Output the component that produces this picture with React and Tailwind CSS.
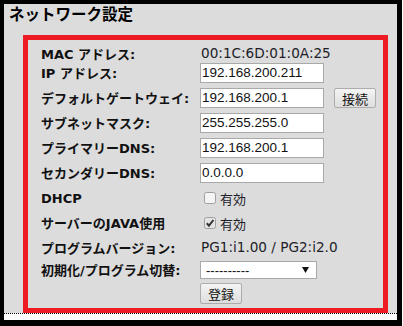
import React from "react";

const LABEL = "[font-family:'DejaVu_Sans','Noto_Sans_CJK_JP',sans-serif] font-bold text-[13px] text-[#111] leading-none";
const VALUE = "[font-family:'DejaVu_Sans','Noto_Sans_CJK_JP',sans-serif] text-[13.6px] text-[#1e1e2a] leading-none";
const INPUT = "w-[124px] h-[20px] bg-white border border-[#a9a9a9] pl-[1px] flex items-center [font-family:'Liberation_Sans',sans-serif] text-[13.5px] text-[#111] leading-none";

function Row({ label, children, className = "" }) {
  return (
    <div className={"flex items-center " + className}>
      <div className={"w-[159px] shrink-0 " + LABEL}>{label}</div>
      <div className="flex items-center">{children}</div>
    </div>
  );
}

function Input({ value }) {
  return <div className={INPUT}>{value}</div>;
}

function Check({ checked }) {
  return (
    <svg width="12" height="12" viewBox="0 0 12 12" className="ml-[4px] mr-[4px] shrink-0">
      <rect x="0.5" y="0.5" width="11" height="11" rx="2" fill={checked ? "#e4e4e4" : "#f4f4f4"} stroke="#a0a0a0" />
      {checked && <path d="M2.8 6.2 L5 8.6 L9.4 3" fill="none" stroke="#333" strokeWidth="2" />}
    </svg>
  );
}

function Button({ children, className = "" }) {
  return (
    <div
      className={
        "h-[20px] border border-[#adadad] rounded-[2px] bg-gradient-to-b from-[#f4f4f4] to-[#dedede] flex items-center justify-center [font-family:'Noto_Sans_CJK_JP',sans-serif] text-[13px] text-[#111] leading-none " +
        className
      }
    >
      {children}
    </div>
  );
}

export default function App() {
  return (
    <div className="flex w-[403px] h-[326px] bg-black overflow-hidden">
      <div className="ml-[4px] mt-[4px] w-[393px] flex flex-col shrink-0">
        <div className="h-[309px] bg-[#dcdcdc] flex flex-col">
          <div className="pl-[5px] h-[20px] flex items-center [font-family:'Noto_Sans_CJK_JP',sans-serif] text-[15.5px] font-bold text-black leading-none">
            ネットワーク設定
          </div>
          <div className="ml-[19px] mt-[11px] w-[365px] h-[278px] border-[5px] border-[#ed1c24] pl-[13px] flex flex-col">
            <Row label="MAC アドレス:" className="mt-[5px] h-[18px]">
              <span className={VALUE + " pl-[1px]"}>00:1C:6D:01:0A:25</span>
            </Row>
            <Row label="IP アドレス:" className="h-[20px]">
              <Input value="192.168.200.211" />
            </Row>
            <Row label="デフォルトゲートウェイ:" className="mt-[5px] h-[20px]">
              <Input value="192.168.200.1" />
              <Button className="ml-[10px] w-[42px]">接続</Button>
            </Row>
            <Row label="サブネットマスク:" className="mt-[5px] h-[20px]">
              <Input value="255.255.255.0" />
            </Row>
            <Row label="プライマリーDNS:" className="mt-[5px] h-[20px]">
              <Input value="192.168.200.1" />
            </Row>
            <Row label="セカンダリーDNS:" className="mt-[5px] h-[20px]">
              <Input value="0.0.0.0" />
            </Row>
            <Row label="DHCP" className="mt-[5px] h-[20px]">
              <Check checked={false} />
              <span className="[font-family:'Noto_Sans_CJK_JP',sans-serif] text-[13px] text-[#1e1e2a] leading-none">有効</span>
            </Row>
            <Row label="サーバーのJAVA使用" className="mt-[5px] h-[20px]">
              <Check checked={true} />
              <span className="[font-family:'Noto_Sans_CJK_JP',sans-serif] text-[13px] text-[#1e1e2a] leading-none">有効</span>
            </Row>
            <Row label="プログラムバージョン:" className="mt-[5px] h-[20px]">
              <span className={VALUE + " pl-[1px]"}>PG1:i1.00 / PG2:i2.0</span>
            </Row>
            <Row label="初期化/プログラム切替:" className="mt-[2px] h-[20px]">
              <div className="w-[117px] h-[18px] bg-white border border-[#a9a9a9] flex items-center justify-between pl-[5px] pr-[7px] [font-family:'Liberation_Sans',sans-serif] text-[13px] text-[#111] leading-none">
                <span>----------</span>
                <svg width="7" height="6" viewBox="0 0 7 6">
                  <path d="M0 0 H7 L3.5 6 Z" fill="#111" />
                </svg>
              </div>
            </Row>
            <div className="mt-[3px] ml-[159px]">
              <Button className="w-[42px] h-[21px]">登録</Button>
            </div>
          </div>
        </div>
        <div className="h-[7px] bg-white border-t border-dotted border-black" />
      </div>
      <div className="ml-auto w-[1px] bg-white h-full" />
    </div>
  );
}
